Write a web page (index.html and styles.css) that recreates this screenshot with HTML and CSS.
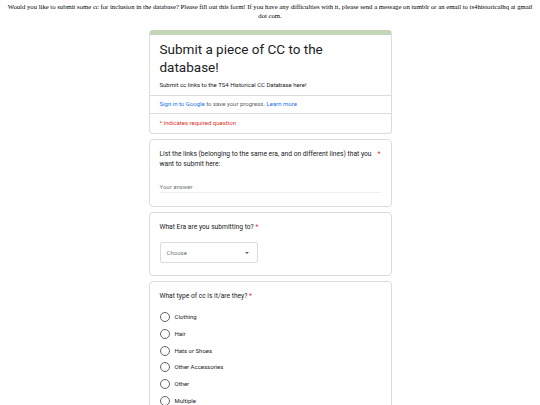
FILE: index.html
```html
<!DOCTYPE html>
<html>
<head>
<meta charset="utf-8">
<link rel="stylesheet" href="styles.css">
</head>
<body>
<p class="intro">Would you like to submit some cc for inclusion in the database? Please fill out this form! If you have any difficulties with it, please send a message on tumblr or an email to ts4historicalhq at gmail dot com.</p>
<main class="form">
  <section class="card head">
    <div class="head-main">
      <h1 class="title">Submit a piece of CC to the database!</h1>
      <p class="desc">Submit cc links to the TS4 Historical CC Database here!</p>
    </div>
    <div class="head-row"><a class="link">Sign in to Google</a> to save your progress. <a class="link">Learn more</a></div>
    <div class="head-row req">* Indicates required question</div>
  </section>
  <section class="card q q-text">
    <div class="q-title q-title-wide"><span>List the links (belonging to the same era, and on different lines) that you want to submit here:</span><span class="star">*</span></div>
    <div class="answer">Your answer</div>
  </section>
  <section class="card q">
    <div class="q-title">What Era are you submitting to? <span class="star">*</span></div>
    <div class="select"><span>Choose</span><span class="caret"></span></div>
  </section>
  <section class="card q">
    <div class="q-title">What type of cc is it/are they? <span class="star">*</span></div>
    <ul class="options">
      <li><span class="radio"></span>Clothing</li>
      <li><span class="radio"></span>Hair</li>
      <li><span class="radio"></span>Hats or Shoes</li>
      <li><span class="radio"></span>Other Accessories</li>
      <li><span class="radio"></span>Other</li>
      <li><span class="radio"></span>Multiple</li>
    </ul>
  </section>
</main>
</body>
</html>
```
FILE: styles.css
```css
html, body { margin: 0; padding: 0; background: #fff; }
body { font-family: Roboto, "Liberation Sans", sans-serif; color: #202124; }
.intro {
  margin: 2px 3px 0;
  font-family: "Liberation Serif", serif;
  font-size: 6.7px;
  line-height: 9px;
  text-align: center;
  color: #000;
}
.form {
  width: 243px;
  margin: 10px auto 0;
  display: flex;
  flex-direction: column;
  gap: 5px;
}
.card {
  border: 1px solid #dadce0;
  border-radius: 4px;
  background: #fff;
}
.head { border-top: 5px solid #c5d6b6; }
.head-main { padding: 5px 10px 6px; }
.title {
  margin: 0;
  font-weight: 400;
  font-size: 13.5px;
  line-height: 18px;
  color: #202124;
}
.desc { margin: 5px 0 0; font-size: 6px; line-height: 8px; color: #202124; }
.head-row {
  border-top: 1px solid #dadce0;
  padding: 4px 10px 5px;
  font-size: 6px;
  line-height: 8px;
  color: #5f6368;
}
.link { color: #1a73e8; }
.req { color: #d93025; padding: 5px 10px 6px; }
.q { padding: 9px 10px 12px; }
.q-text { padding-bottom: 13px; }
.q-title { font-size: 6.7px; line-height: 10px; color: #202124; }
.q-title-wide { display: flex; justify-content: space-between; gap: 6px; }
.q-title-wide span:first-child { flex: 1; }
.star { color: #d93025; }
.answer {
  margin-top: 14px;
  padding-bottom: 1px;
  border-bottom: 1px solid #eceef0;
  font-size: 6px;
  line-height: 8px;
  color: #70757a;
}
.select {
  margin-top: 10px;
  width: 98px;
  height: 21px;
  box-sizing: border-box;
  border: 1px solid #dadce0;
  border-radius: 2px;
  display: flex;
  align-items: center;
  justify-content: space-between;
  padding: 0 8px 0 6px;
  font-size: 6px;
  color: #70757a;
}
.caret {
  width: 0; height: 0;
  border-left: 2.5px solid transparent;
  border-right: 2.5px solid transparent;
  border-top: 2.5px solid #5f6368;
}
.options { list-style: none; margin: 11px 0 0; padding: 0; display: flex; flex-direction: column; gap: 6.8px; }
.options li {
  display: flex;
  align-items: center;
  gap: 5px;
  font-size: 6px;
  line-height: 10px;
  color: #202124;
}
.radio {
  width: 10px; height: 10px;
  box-sizing: border-box;
  border: 1.2px solid #5f6368;
  border-radius: 50%;
}
```
